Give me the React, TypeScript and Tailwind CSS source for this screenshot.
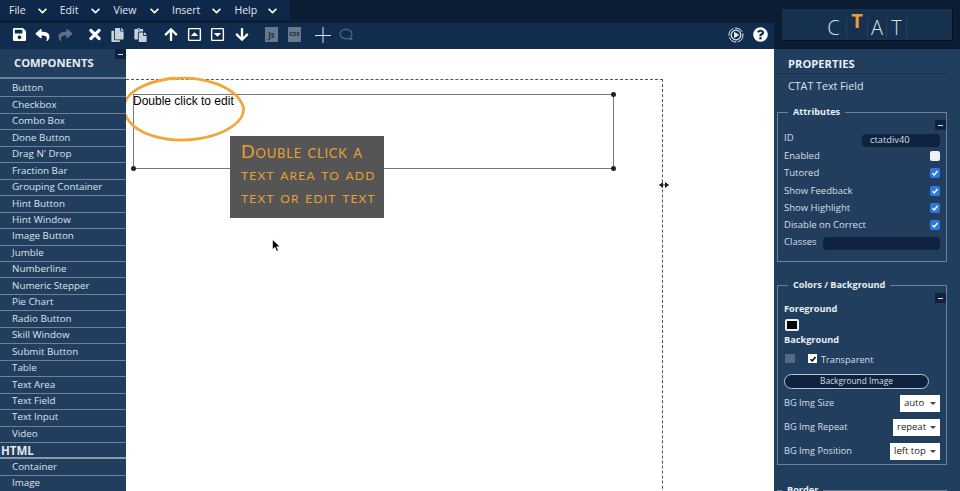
import { FaArrowDown, FaArrowUp, FaChevronDown, FaCopy, FaPaste, FaQuestionCircle, FaRegCaretSquareDown, FaRegCaretSquareUp, FaRegComment, FaReply, FaSave, FaShare, FaTimes } from "react-icons/fa";

const menus = [
  { label: "File", width: "w-[52px]" },
  { label: "Edit", width: "w-[55px]" },
  { label: "View", width: "w-[60px]" },
  { label: "Insert", width: "w-[64px]" },
  { label: "Help", width: "w-[57px]" },
];
const components = [
  "Button", "Checkbox", "Combo Box", "Done Button", "Drag N' Drop", "Fraction Bar", "Grouping Container",
  "Hint Button", "Hint Window", "Image Button", "Jumble", "Numberline", "Numeric Stepper", "Pie Chart",
  "Radio Button", "Skill Window", "Submit Button", "Table", "Text Area", "Text Field", "Text Input", "Video",
];
const checks = [
  { label: "Enabled", on: false },
  { label: "Tutored", on: true },
  { label: "Show Feedback", on: true },
  { label: "Show Highlight", on: true },
  { label: "Disable on Correct", on: true },
];
const selects = [
  { label: "BG Img Size", value: "auto", width: "w-[40px]" },
  { label: "BG Img Repeat", value: "repeat", width: "w-[47px]" },
  { label: "BG Img Position", value: "left top", width: "w-[50px]" },
];

const Minimize = ({ className }: { className: string }) => (
  <div className={`absolute flex h-[10px] w-[11px] items-center justify-center bg-[#0f2340] ${className}`}>
    <div className="h-[1px] w-[5px] bg-[#d5dce4]" />
  </div>
);

const SideItem = ({ label }: { label: string }) => (
  <div className="flex h-[16.46px] items-center border-b border-[#6d8096] pl-3 text-[9.8px] text-[#dde3ea]">{label}</div>
);

const Header = () => (
  <div className="flex h-[49px] shrink-0 bg-[#0c1c33]">
    <div className="flex w-[774px] flex-col">
      <div className="flex h-[20px] w-[290px] items-center bg-[#0f2748] pl-[9px] pt-[1px] text-[10.5px] text-[#e3e8ee]">
        {menus.map((menu) => (
          <div key={menu.label} className={`flex items-center justify-between pr-[12px] ${menu.width}`}>
            <span>{menu.label}</span>
            <FaChevronDown className="h-[10px] w-[11px] text-white" />
          </div>
        ))}
      </div>
      <div className="mt-[3px] flex h-[26px] items-center justify-between bg-[#102c4e] pb-[3px] pl-[12px] pr-[6px]">
        <div className="flex items-center text-white">
          <FaSave className="h-[15px] w-[15px]" />
          <FaReply className="ml-[7px] h-[14px] w-[17px]" />
          <FaShare className="ml-[6px] h-[14px] w-[17px] text-[#5b6f85]" />
          <FaTimes className="ml-[13px] h-[17px] w-[16px]" />
          <FaCopy className="ml-[7px] h-[14px] w-[15px] text-[#c9d1da]" />
          <FaPaste className="ml-[8px] h-[14px] w-[15px] text-[#c9d1da]" />
          <FaArrowUp className="ml-[16px] h-[15px] w-[14px]" />
          <FaRegCaretSquareUp className="ml-[9px] h-[15px] w-[15px]" />
          <FaRegCaretSquareDown className="ml-[8px] h-[15px] w-[15px]" />
          <FaArrowDown className="ml-[10px] h-[15px] w-[14px]" />
          <div className="ml-[16px] flex h-[15px] w-[13px] items-center justify-center bg-[#69788b] text-[8px] font-bold text-[#1b324f]">Js</div>
          <div className="ml-[10px] flex h-[15px] w-[13px] items-center justify-center bg-[#69788b] text-[7px] font-bold text-[#1b324f]">css</div>
          <svg className="ml-[14px] h-[16px] w-[16px]" viewBox="0 0 16 16" stroke="#dfe4ea" strokeWidth="1">
            <path d="M0 8.5h16M8 0v16" />
          </svg>
          <FaRegComment className="ml-[8px] h-[13px] w-[14px] -scale-x-100 text-[#53677e]" />
        </div>
        <div className="flex items-center gap-[9px]">
          <svg className="h-[16px] w-[16px]" viewBox="0 0 16 16" fill="none" stroke="#e5e9ee">
            <circle cx="8" cy="8" r="7" strokeDasharray="9 1.5" />
            <circle cx="8" cy="8" r="4.8" strokeWidth="1.3" />
            <path d="M6.5 5.5v5l4-2.5z" fill="#e5e9ee" />
          </svg>
          <FaQuestionCircle className="h-[15px] w-[15px] text-white" />
        </div>
      </div>
    </div>
    <div className="ml-[8px] mt-[9px] flex h-[31px] w-[170px] items-center justify-center bg-[#16304f] pt-[6px] text-[20px] leading-none font-light text-[#d9e0e8] shadow-[1px_1px_0_#05101e]">
      <span className="w-[20px] border-r border-[#24405f] pr-[6px] text-center">C</span>
      <span className="-mt-[14px] w-[20px] text-center font-bold text-[#eb9a38]">T</span>
      <span className="w-[20px] border-x border-[#24405f] text-center">A</span>
      <span className="w-[20px] border-r border-[#24405f] text-center">T</span>
    </div>
  </div>
);

const Sidebar = () => (
  <div className="relative w-[126px] shrink-0 overflow-hidden bg-[#223e5e]">
    <Minimize className="right-0 top-0" />
    <div className="flex h-[30px] items-center border-b-2 border-[#6d8096] pl-[14px] pt-[1px] text-[11.2px] font-bold text-[#e8edf2]">COMPONENTS</div>
    <div className="pt-[2px]">
      {components.map((item) => (
        <SideItem key={item} label={item} />
      ))}
      <div className="flex h-[16.46px] items-center border-b-2 border-[#8b9aab] pl-[1px] text-[11.5px] font-bold text-[#e3e8ee]">HTML</div>
      <SideItem label="Container" />
      <SideItem label="Image" />
    </div>
  </div>
);

const Canvas = () => (
  <div className="relative flex-1 overflow-hidden bg-white font-['Liberation_Sans',sans-serif]">
    <div className="absolute left-0 top-[30px] h-[500px] w-[537px] border-r border-t border-dashed border-[#555]" />
    <div className="absolute left-[7px] top-[45px] h-[75px] w-[481px] border border-[#777] text-[12px] leading-[12px] text-black">
      <span className="absolute -left-[1px] top-0">Double click to edit</span>
      <div className="absolute -bottom-[3px] -left-[3px] h-[5px] w-[5px] rounded-full bg-[#222]" />
      <div className="absolute -bottom-[3px] -right-[3px] h-[5px] w-[5px] rounded-full bg-[#222]" />
      <div className="absolute -right-[3px] -top-[3px] h-[5px] w-[5px] rounded-full bg-[#222]" />
    </div>
    <svg className="absolute left-[-5px] top-[26px] h-[70px] w-[130px]" viewBox="0 0 130 70" fill="none" stroke="#f0a83c" strokeWidth="2.8">
      <path d="M50 4C78 0 114 10 122 31c4 15-18 29-46 33C46 68 12 60 4 39-2 22 18 7 54 3" />
      <path d="M60 3C86 3 114 12 121 29M6 43c8 14 30 23 56 21" strokeWidth="1.2" opacity="0.6" />
    </svg>
    <div className="absolute left-[104px] top-[87px] flex h-[82px] w-[154px] flex-col justify-center gap-[3px] bg-[#555] pb-[6px] pl-[11px] font-['Lato',sans-serif] text-[17px] leading-[20px] tracking-[1.2px] text-[#e8a033] [font-variant:small-caps]">
      <span className="text-[18px] leading-[20px] tracking-[0.8px]">Double click a</span>
      <span>text area to add</span>
      <span>text or edit text</span>
    </div>
    <svg className="absolute left-[146px] top-[190px] h-[13px] w-[9px]" viewBox="0 0 9 13">
      <path d="M0.5 0.5v10l2.5-2.2 1.7 4 1.7-.8-1.7-3.8h3.3z" fill="#000" stroke="#fff" strokeWidth="0.6" />
    </svg>
    <svg className="absolute left-[533px] top-[132px] h-[8px] w-[10px]" viewBox="0 0 10 8" stroke="#222" fill="#222">
      <path d="M0 4h10M1 4l2.5-2.5v5zM9 4L6.5 1.5v5z" />
    </svg>
  </div>
);

const Check = ({ on }: { on: boolean }) =>
  on ? (
    <div className="flex h-[10px] w-[10px] items-center justify-center rounded-[2px] bg-[#2f79dc]">
      <svg className="h-[8px] w-[8px]" viewBox="0 0 8 8" fill="none" stroke="#fff" strokeWidth="1.4">
        <path d="M1.5 4.2l1.8 1.8 3.2-4" />
      </svg>
    </div>
  ) : (
    <div className="h-[10px] w-[10px] rounded-[2px] bg-[#eef0f2]" />
  );

const Properties = () => (
  <div className="relative w-[186px] shrink-0 overflow-hidden bg-[#223e5e] pl-[3px] pr-[13px] text-[9.5px] text-[#d7dee6]">
    <div className="flex h-[25px] items-end border-b border-dotted border-[#0f2340] pl-[11px] text-[11.2px] font-bold text-[#e8edf2]">PROPERTIES</div>
    <div className="mt-[5px] pl-[11px] text-[10.7px] leading-[14px] text-[#dde3ea]">CTAT Text Field</div>
    <fieldset className="relative mt-[12px] h-[157px] border border-[#6d8096] pl-[6px] pr-[6px]">
      <legend className="ml-[4px] px-[5px] text-[9.2px] leading-[14px] font-bold text-[#e8edf2]">Attributes</legend>
      <Minimize className="right-0 top-[1px]" />
      <div className="mt-[11px] flex h-[17px] items-center justify-between">
        <span>ID</span>
        <div className="mt-[3px] flex h-[13px] w-[78px] items-center rounded-[4px] bg-[#0f2340] pl-[8px] text-[9.3px]">ctatdiv40</div>
      </div>
      {checks.map((check) => (
        <div key={check.label} className="flex h-[17.3px] items-center justify-between pt-[1px]">
          <span>{check.label}</span>
          <Check on={check.on} />
        </div>
      ))}
      <div className="flex h-[17px] items-center justify-between pt-[1px]">
        <span>Classes</span>
        <div className="mt-[3px] h-[13px] w-[117px] rounded-[4px] bg-[#0f2340]" />
      </div>
    </fieldset>
    <fieldset className="relative mt-[16px] h-[187px] border border-[#6d8096] pl-[6px] pr-[6px]">
      <legend className="ml-[4px] px-[5px] text-[9.2px] leading-[14px] font-bold text-[#e8edf2]">Colors / Background</legend>
      <Minimize className="right-0 top-[1px]" />
      <div className="mt-[10px] text-[9.2px] leading-[14px] font-bold text-[#e8edf2]">Foreground</div>
      <div className="ml-[1px] mt-[3px] h-[12px] w-[14px] rounded-[2px] border-2 border-[#eef0f2] bg-black" />
      <div className="mt-[2px] text-[9.2px] leading-[14px] font-bold text-[#e8edf2]">Background</div>
      <div className="mt-[6px] flex h-[14px] items-center">
        <div className="ml-[1px] -mt-[3px] h-[9px] w-[10px] bg-[#566a85]" />
        <div className="ml-[13px] -mt-[3px] flex h-[9px] w-[9px] items-center justify-center bg-white">
          <svg className="h-[8px] w-[8px]" viewBox="0 0 8 8" fill="none" stroke="#000" strokeWidth="1.5">
            <path d="M1.5 4.2l1.8 1.8 3.2-4" />
          </svg>
        </div>
        <span className="ml-[4px] text-[9.2px]">Transparent</span>
      </div>
      <div className="mt-[7px] flex h-[15px] w-[145px] items-center justify-center rounded-full border border-[#b9c4d0] bg-[#0f2340] text-[8.4px]">Background Image</div>
      <div className="mt-[2px]">
        {selects.map((select) => (
          <div key={select.label} className="flex h-[24px] items-center justify-between text-[9.2px]">
            <span>{select.label}</span>
            <div className={`relative flex h-[17px] items-center bg-white pl-[4px] text-[9.5px] text-[#222] ${select.width}`}>
              {select.value}
              <div className="absolute right-[4px] top-[7px] h-0 w-0 border-x-[3px] border-t-[3px] border-x-transparent border-t-[#33475f]" />
            </div>
          </div>
        ))}
      </div>
    </fieldset>
    <fieldset className="mt-[18px] h-[20px] border border-[#6d8096]">
      <legend className="ml-[4px] px-[5px] text-[9.2px] leading-[14px] font-bold text-[#e8edf2]">Border</legend>
    </fieldset>
  </div>
);

const App = () => (
  <div className="flex h-[491px] w-[960px] flex-col overflow-hidden bg-[#0c1c33] font-['Open_Sans',sans-serif]">
    <Header />
    <div className="flex min-h-0 flex-1">
      <Sidebar />
      <Canvas />
      <Properties />
    </div>
  </div>
);

export default App;
